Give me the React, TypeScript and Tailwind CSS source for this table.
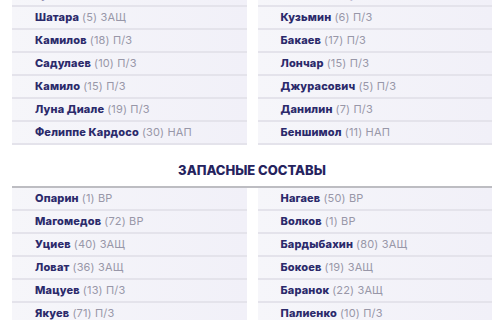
import * as React from "react";

type Player = { name: string; num: number; pos: string };

const startersHome: Player[] = [
  { name: "Гудиев", num: 1, pos: "ВР" },
  { name: "Шатара", num: 5, pos: "ЗАЩ" },
  { name: "Камилов", num: 18, pos: "П/З" },
  { name: "Садулаев", num: 10, pos: "П/З" },
  { name: "Камило", num: 15, pos: "П/З" },
  { name: "Луна Диале", num: 19, pos: "П/З" },
  { name: "Фелиппе Кардосо", num: 30, pos: "НАП" },
];

const startersAway: Player[] = [
  { name: "Жоао Виктор", num: 4, pos: "ЗАЩ" },
  { name: "Кузьмин", num: 6, pos: "П/З" },
  { name: "Бакаев", num: 17, pos: "П/З" },
  { name: "Лончар", num: 15, pos: "П/З" },
  { name: "Джурасович", num: 5, pos: "П/З" },
  { name: "Данилин", num: 7, pos: "П/З" },
  { name: "Беншимол", num: 11, pos: "НАП" },
];

const subsHome: Player[] = [
  { name: "Опарин", num: 1, pos: "ВР" },
  { name: "Магомедов", num: 72, pos: "ВР" },
  { name: "Уциев", num: 40, pos: "ЗАЩ" },
  { name: "Ловат", num: 36, pos: "ЗАЩ" },
  { name: "Мацуев", num: 13, pos: "П/З" },
  { name: "Якуев", num: 71, pos: "П/З" },
];

const subsAway: Player[] = [
  { name: "Нагаев", num: 50, pos: "ВР" },
  { name: "Волков", num: 1, pos: "ВР" },
  { name: "Бардыбахин", num: 80, pos: "ЗАЩ" },
  { name: "Бокоев", num: 19, pos: "ЗАЩ" },
  { name: "Баранок", num: 22, pos: "ЗАЩ" },
  { name: "Палиенко", num: 10, pos: "П/З" },
];

function PlayerRow({ p }: { p: Player }) {
  return (
    <div className="h-[23px] flex items-center pl-[23px] bg-gradient-to-r from-[#f6f6fa] to-[#f1f0f8] border-b-2 border-[#e4e3eb] text-[11px] tracking-[0.15px] leading-none whitespace-nowrap">
      <span className="font-extrabold text-[#2b2a6b]">{p.name}</span>
      <span className="ml-[3px] text-[#9897a8]">
        ({p.num}) {p.pos}
      </span>
    </div>
  );
}

function Lineup({ home, away }: { home: Player[]; away: Player[] }) {
  return (
    <div className="grid grid-cols-2 gap-x-[11px]">
      <div className="flex flex-col">
        {home.map((p) => (
          <PlayerRow key={p.name} p={p} />
        ))}
      </div>
      <div className="flex flex-col">
        {away.map((p) => (
          <PlayerRow key={p.name} p={p} />
        ))}
      </div>
    </div>
  );
}

export default function App() {
  return (
    <div
      className="w-[500px] h-[320px] overflow-hidden bg-white"
      style={{ fontFamily: "Inter, 'Noto Sans', sans-serif" }}
    >
      <div className="-mt-[16px] pl-[12px] pr-[8px]">
        <Lineup home={startersHome} away={startersAway} />

        <h2 className="pt-[17px] pb-[8px] text-center text-[13px] leading-[16px] font-extrabold text-[#25235e]">
          ЗАПАСНЫЕ СОСТАВЫ
        </h2>

        <div className="border-t-2 border-[#bdbdc2]">
          <Lineup home={subsHome} away={subsAway} />
        </div>
      </div>
    </div>
  );
}
